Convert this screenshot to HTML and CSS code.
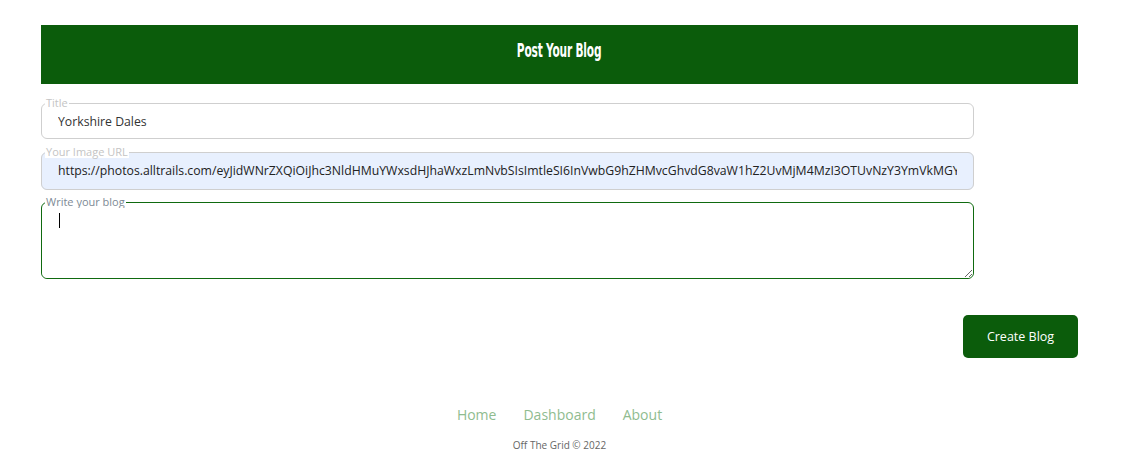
FILE: index.html
```html
<!DOCTYPE html>
<html lang="en">
<head>
<meta charset="utf-8">
<title>Post Your Blog</title>
<link rel="stylesheet" href="styles.css">
</head>
<body>
<div class="page">
  <header class="banner"><h1 class="banner-title">Post Your Blog</h1></header>
  <form class="blog-form">
    <fieldset class="field field-title">
      <legend class="field-label">Title</legend>
      <input class="field-input" type="text" value="Yorkshire Dales">
    </fieldset>
    <fieldset class="field field-autofill">
      <legend class="field-label">Your Image URL</legend>
      <input class="field-input" type="text" value="https://photos.alltrails.com/eyJidWNrZXQiOiJhc3NldHMuYWxsdHJhaWxzLmNvbSIsImtleSI6InVwbG9hZHMvcGhvdG8vaW1hZ2UvMjM4MzI3OTUvNzY3YmVkMGYyZTQ5NzQ">
    </fieldset>
    <fieldset class="field field-focus">
      <legend class="field-label field-label-dark">Write your blog</legend>
      <div class="area-wrap">
        <textarea class="field-area" autofocus></textarea>
        <span class="caret"></span>
      </div>
    </fieldset>
    <div class="actions">
      <button type="button" class="btn">Create Blog</button>
    </div>
  </form>
  <footer class="footer">
    <nav class="footer-nav">
      <a href="#" class="footer-link">Home</a>
      <a href="#" class="footer-link">Dashboard</a>
      <a href="#" class="footer-link">About</a>
    </nav>
    <p class="copyright">Off The Grid © 2022</p>
  </footer>
</div>
</body>
</html>
```
FILE: styles.css
```css
* { box-sizing: border-box; }
body {
  margin: 0;
  background: #fff;
  font-family: "Open Sans", "Liberation Sans", sans-serif;
  color: #333;
}
.page {
  width: 1037px;
  margin: 25px 0 0 41px;
}
.banner {
  background: #0b5c0b;
  height: 59px;
  display: flex;
  align-items: center;
  justify-content: center;
  padding-bottom: 10px;
}
.banner-title {
  margin: 0;
  color: #fff;
  font-family: "Liberation Sans Narrow", "DejaVu Sans Condensed", sans-serif;
  font-weight: bold;
  font-size: 19px;
  letter-spacing: -0.3px;
  transform: scaleX(0.62);
}
.blog-form {
  display: flex;
  flex-direction: column;
  padding-top: 13px;
}
.field {
  width: 933px;
  margin: 0 0 7px;
  padding: 0;
  border: 1px solid #cfcfcf;
  border-radius: 6px;
  min-width: 0;
}
.field-label {
  margin-left: 3px;
  padding: 0 1px;
  font-size: 11px;
  line-height: 12px;
  color: #c4c4c4;
  background: #fff;
}
.field-label-dark { color: #7d8a95; }
.field-input {
  display: block;
  width: calc(100% - 16px);
  height: 24px;
  margin-bottom: 5px;
  padding: 0 0 0 16px;
  border: none;
  outline: none;
  background: transparent;
  font-family: "Open Sans", "Liberation Sans", sans-serif;
  font-size: 12.25px;
  color: #333;
}
.field-autofill {
  background: #e8f0fe;
  margin-bottom: 6px;
}
.field-autofill .field-input {
  color: #222;
  height: 25px;
  margin-bottom: 6px;
}
.field-focus {
  border-color: #0f6a0f;
  margin-bottom: 0;
}
.area-wrap {
  position: relative;
}
.field-area {
  display: block;
  width: 100%;
  height: 70px;
  padding: 4px 16px;
  border: none;
  outline: none;
  border-radius: 0 0 6px 6px;
  font-family: "Open Sans", "Liberation Sans", sans-serif;
  font-size: 12.25px;
  resize: vertical;
  caret-color: transparent;
}
.caret {
  position: absolute;
  left: 17px;
  top: 5px;
  width: 1px;
  height: 15px;
  background: #000;
}
.actions {
  display: flex;
  justify-content: flex-end;
  margin-top: 36px;
}
.btn {
  width: 115px;
  height: 43px;
  border: none;
  border-radius: 5px;
  background: #0b5c0b;
  color: #fff;
  font-family: "Open Sans", "Liberation Sans", sans-serif;
  font-size: 12.5px;
  cursor: pointer;
}
.footer {
  display: flex;
  flex-direction: column;
  align-items: center;
  padding-top: 47px;
}
.footer-nav {
  display: flex;
  gap: 27px;
}
.footer-link {
  color: #8fbc8f;
  text-decoration: none;
  font-size: 14px;
  line-height: 20px;
}
.copyright {
  margin: 13px 0 0;
  font-size: 10px;
  color: #666;
}
```
